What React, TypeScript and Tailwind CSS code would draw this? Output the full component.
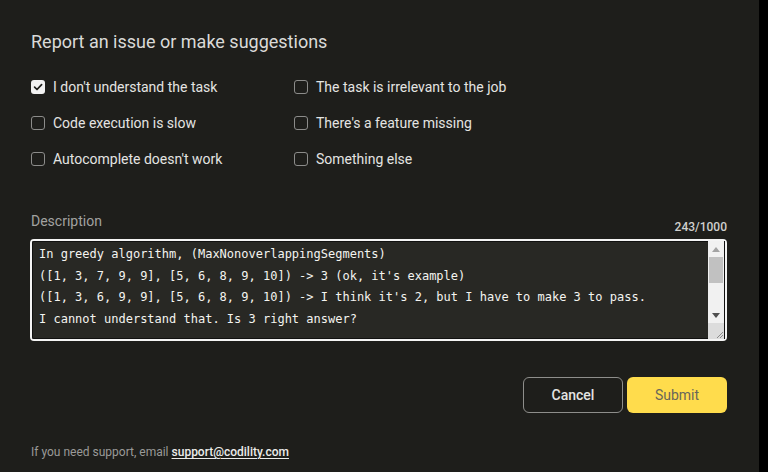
import React from "react";

function Box({ checked }: { checked?: boolean }) {
  if (checked) {
    return (
      <span className="flex h-[14px] w-[14px] shrink-0 items-center justify-center rounded-[3px] bg-[#f2f2f2]">
        <svg width="10" height="10" viewBox="0 0 10 10" fill="none">
          <path d="M1.6 5.2 L4 7.5 L8.6 2.6" stroke="#1e1e1b" strokeWidth="1.7" strokeLinecap="round" strokeLinejoin="round" />
        </svg>
      </span>
    );
  }
  return <span className="h-[14px] w-[14px] shrink-0 rounded-[3px] border border-[#8c8c8a]" />;
}

function Item({ label, checked }: { label: string; checked?: boolean }) {
  return (
    <div className="flex h-[36px] items-center gap-[8px]">
      <Box checked={checked} />
      <span className="text-[14px] text-[#e4e4e2]">{label}</span>
    </div>
  );
}

export default function App() {
  const lines = [
    "In greedy algorithm, (MaxNonoverlappingSegments)",
    "([1, 3, 7, 9, 9], [5, 6, 8, 9, 10]) -> 3 (ok, it's example)",
    "([1, 3, 6, 9, 9], [5, 6, 8, 9, 10]) -> I think it's 2, but I have to make 3 to pass.",
    "I cannot understand that. Is 3 right answer?",
  ];
  return (
    <div className="flex h-[472px] w-[768px] overflow-hidden bg-black" style={{ fontFamily: "Roboto, 'Liberation Sans', sans-serif" }}>
      <div className="flex h-full w-[759px] flex-col bg-[#1e1e1b] pl-[31px] pr-[32px]">
        <h1 className="mt-[30px] text-[18px] leading-[24px] text-[#dadad8]">Report an issue or make suggestions</h1>
        <div className="mt-[15px] grid grid-cols-[263px_1fr]">
          <div className="flex flex-col">
            <Item label="I don't understand the task" checked />
            <Item label="Code execution is slow" />
            <Item label="Autocomplete doesn't work" />
          </div>
          <div className="flex flex-col">
            <Item label="The task is irrelevant to the job" />
            <Item label="There's a feature missing" />
            <Item label="Something else" />
          </div>
        </div>
        <div className="mt-[34px] flex items-start justify-between">
          <span className="text-[14px] leading-[20px] text-[#a2a2a0]">Description</span>
        </div>
        <div className="-mt-[12px] flex justify-end">
          <span className="text-[12px] font-medium leading-[16px] text-[#d0d0ce]">243/1000</span>
        </div>
        <div className="mt-[4px] flex h-[102px] w-[697px] -ml-[1px] rounded-[4px] border-2 border-[#f4f4f4] bg-[#282824]">
          <div className="flex flex-1 overflow-hidden border border-r-0 border-[#111110] rounded-l-[2px]">
            <div
              className="whitespace-pre pl-[6px] pt-[2px] text-[12px] leading-[21.6px] text-[#f4f4f0]"
              style={{ fontFamily: "'DejaVu Sans Mono', 'Liberation Mono', monospace" }}
            >
              {lines.map((l, i) => (
                <div key={i}>{l}</div>
              ))}
            </div>
          </div>
          <div className="flex w-[16px] flex-col bg-[#f1f1f1]">
            <div className="flex h-[16px] items-center justify-center">
              <svg width="8" height="5" viewBox="0 0 8 5"><path d="M0 5 L4 0 L8 5 Z" fill="#a3a3a3" /></svg>
            </div>
            <div className="h-[26px] bg-[#c1c1c1] mx-[1px]" />
            <div className="flex-1" />
            <div className="flex h-[16px] items-center justify-center">
              <svg width="8" height="5" viewBox="0 0 8 5"><path d="M0 0 L4 5 L8 0 Z" fill="#505050" /></svg>
            </div>
            <div className="relative h-[16px] bg-[#dcdcdc]">
              <svg className="absolute bottom-0 right-0" width="10" height="10" viewBox="0 0 10 10">
                <path d="M9 3 L3 9 M9 6 L6 9" stroke="#8a8a8a" strokeWidth="1" />
              </svg>
            </div>
          </div>
          <div className="w-[1px] bg-[#111110]" />
        </div>
        <div className="mt-[36px] flex justify-end gap-[4px] pr-0">
          <button className="h-[36px] w-[100px] rounded-[6px] border border-[#8e8e8b] text-[14px] font-medium text-[#e4e4e2]">Cancel</button>
          <button className="h-[36px] w-[100px] rounded-[6px] bg-[#ffdc4c] text-[14px] text-[#68665a]">Submit</button>
        </div>
        <div className="mt-[31px] text-[12px] leading-[16px] text-[#9a9a98]">
          If you need support, email{" "}
          <span className="font-medium text-[#ececea] underline underline-offset-[2px]">support@codility.com</span>
        </div>
      </div>
      <div className="h-full w-[9px] bg-black" />
    </div>
  );
}
